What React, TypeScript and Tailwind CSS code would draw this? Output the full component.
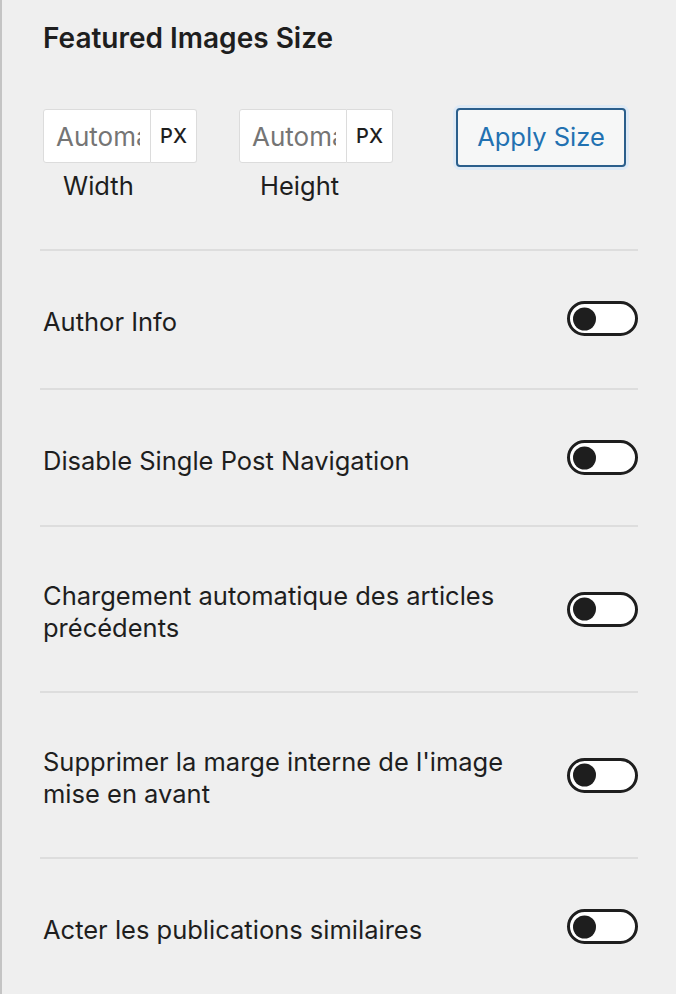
import { useState } from "react";

const rows = [
  "Author Info",
  "Disable Single Post Navigation",
  "Chargement automatique des articles précédents",
  "Supprimer la marge interne de l'image mise en avant",
  "Acter les publications similaires",
];

const Toggle = ({ on, onChange }: { on: boolean; onChange: () => void }) => (
  <button
    type="button"
    onClick={onChange}
    className={`relative shrink-0 w-[71px] h-[35px] rounded-full border-[3px] border-[#1e1e1e] ${
      on ? "bg-[#1e1e1e]" : "bg-white"
    }`}
  >
    <span
      className={`absolute top-1/2 -translate-y-1/2 w-[23px] h-[23px] rounded-full ${
        on ? "left-[40px] bg-white" : "left-[3px] bg-[#1e1e1e]"
      }`}
    />
  </button>
);

const SizeField = ({ label, labelClass }: { label: string; labelClass: string }) => (
  <div className="flex flex-col">
    <div className="flex h-[54px]">
      <input
        placeholder="Automatic"
        className="w-[108px] h-full bg-white border border-[#dcdcdc] rounded-l-[3px] pl-[12px] pr-[10px] text-[26px] text-[#1e1e1e] placeholder:text-[#757575] outline-none"
      />
      <div className="w-[46px] h-full bg-white border border-l-0 border-[#dcdcdc] rounded-r-[3px] flex items-center justify-center text-[20px] font-medium text-[#1e1e1e]">
        PX
      </div>
    </div>
    <div className={`mt-[7px] leading-[32px] text-[25.5px] text-[#1e1e1e] ${labelClass}`}>{label}</div>
  </div>
);

export default function App() {
  const [toggles, setToggles] = useState<boolean[]>(rows.map(() => false));

  return (
    <div
      className="min-h-[994px] bg-[#efefef] border-l-2 border-[#c4c4c4] pl-[38px] pr-[38px] pt-[22px] text-[#1e1e1e]"
      style={{ fontFamily: "Inter, 'Noto Sans', sans-serif" }}
    >
      {/* Featured images size */}
      <h2 className="pl-[3px] text-[28px] leading-[32px] font-semibold">Featured Images Size</h2>
      <div className="flex items-start pl-[3px] mt-[55px] pb-[47px] border-b-2 border-[#dddddd]">
        <SizeField label="Width" labelClass="pl-[20px]" />
        <div className="ml-[42px]">
          <SizeField label="Height" labelClass="pl-[21px]" />
        </div>
        <button
          type="button"
          className="ml-[63px] -mt-px w-[170px] h-[59px] rounded-[4px] border-2 border-[#2b5f8c] bg-[#f6f7f7] text-[25.5px] text-[#2271b1] shadow-[0_0_0_3px_#deeaf6]"
        >
          Apply Size
        </button>
      </div>

      {/* Toggles */}
      {rows.map((label, i) => (
        <div
          key={label}
          className={`flex items-center justify-between gap-6 pt-[50px] ${i === 0 ? "pb-[52px]" : "pb-[50px]"} ${
            i < rows.length - 1 ? "border-b-2 border-[#dddddd]" : ""
          }`}
        >
          <span className="pl-[3px] max-w-[480px] text-[25.5px] leading-[32px] translate-y-[3px]">{label}</span>
          <Toggle
            on={toggles[i]}
            onChange={() => setToggles((t) => t.map((v, j) => (j === i ? !v : v)))}
          />
        </div>
      ))}
    </div>
  );
}
